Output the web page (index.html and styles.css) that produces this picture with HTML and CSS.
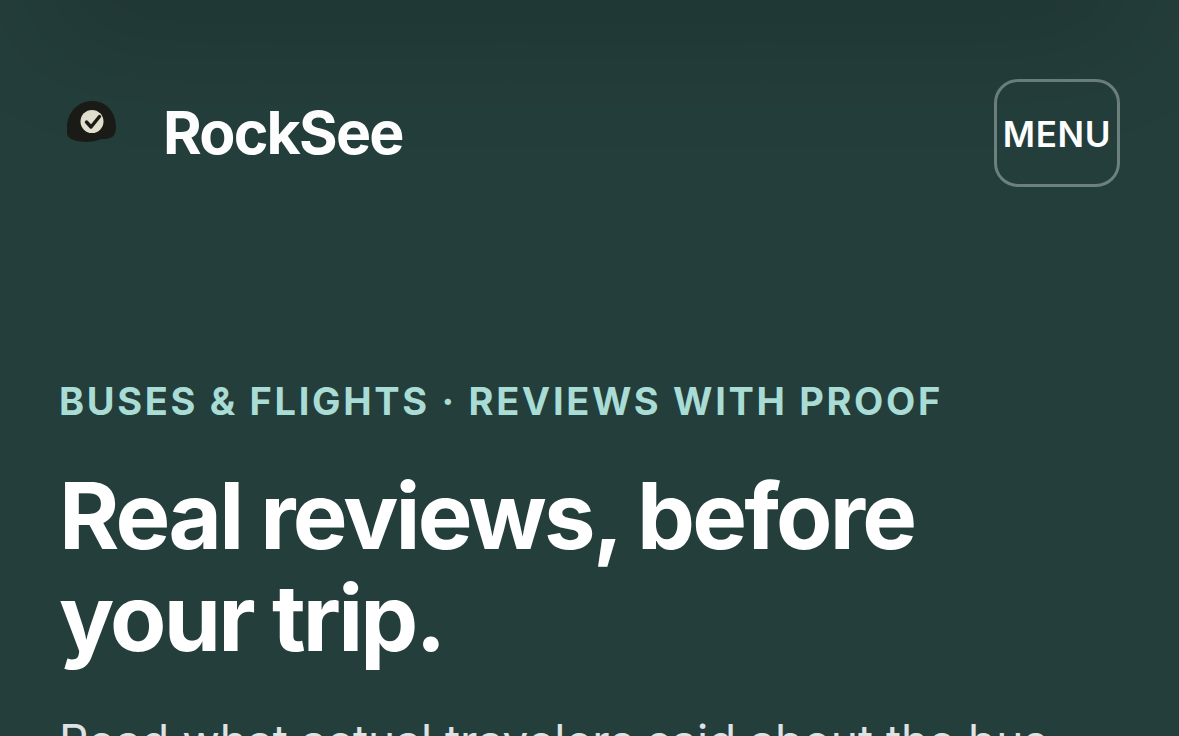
FILE: index.html
```
<!DOCTYPE html>
<html lang="en">
<head>
    <meta charset="UTF-8">
    <meta name="viewport" content="width=device-width, initial-scale=1.0">
    <title>RockSee</title>
    <link rel="stylesheet" href="styles.css">
</head>
<body>
    <header class="header">
        <a href="#" class="brand">
            <svg class="brand-icon" viewBox="0 0 64 64" aria-hidden="true">
                <path d="M8 31C9 16 20 6 33 6c15 0 24 12 24 26 0 10-5 12-13 12-5 0-7 3-16 3C15 47 7 43 8 37z" fill="#1b1c17"/>
                <circle cx="33" cy="26.500" r="11.500" fill="#e4e0cf"/>
                <path d="M27.500 27l4.500 5 8.500-10.500" fill="none" stroke="#1b1c17" stroke-width="3.400" stroke-linecap="round" stroke-linejoin="round"/>
            </svg>
            <span class="brand-name">RockSee</span>
        </a>
        <button type="button" class="menu-button">MENU</button>
    </header>

    <main class="hero">
        <p class="eyebrow">Buses &amp; flights · Reviews with proof</p>
        <h1>Real reviews, before your trip.</h1>
        <p class="lead">Read what actual travelers said about the bus</p>
    </main>
</body>
</html>
```
FILE: styles.css
```
body {
    font-family: Inter, sans-serif;
    margin: 0;
    min-height: 100vh;
    background-color: #243e3b;
    color: white;
    overflow: hidden;
}

/* Soft shade under the top edge */
body::before {
    content: "";
    position: absolute;
    top: -60px;
    left: 60px;
    right: 60px;
    height: 60px;
    border-radius: 30px;
    box-shadow: 0 12px 120px 24px rgba(0, 0, 0, 0.16);
}

.header {
    display: flex;
    align-items: center;
    justify-content: space-between;
    padding: 79px 59px 0;
}

.brand {
    display: flex;
    align-items: center;
    gap: 40px;
    color: white;
    text-decoration: none;
}

.brand-icon {
    width: 64px;
    height: 64px;
    margin-bottom: 12px;
}

.brand-name {
    font-size: 59px;
    font-weight: 700;
    line-height: 72px;
    letter-spacing: -0.03em;
}

.menu-button {
    box-sizing: border-box;
    width: 126px;
    height: 108px;
    padding: 2px 0 0;
    border: 3px solid #6c817e;
    border-radius: 24px;
    background: transparent;
    color: white;
    font-family: inherit;
    font-size: 35px;
    font-weight: 600;
    letter-spacing: 0.02em;
}

.hero {
    padding: 190px 59px 0;
}

.eyebrow {
    margin: 0 0 40px;
    color: #a8dcd5;
    font-size: 38px;
    font-weight: 700;
    line-height: 48px;
    letter-spacing: 0.07em;
    text-transform: uppercase;
}

h1 {
    max-width: 960px;
    margin: 0 0 36px;
    font-size: 92px;
    font-weight: 700;
    line-height: 102px;
    letter-spacing: -0.03em;
}

.lead {
    margin: 0;
    color: #dee2e2;
    font-size: 46px;
    line-height: 72px;
    white-space: nowrap;
}
```
